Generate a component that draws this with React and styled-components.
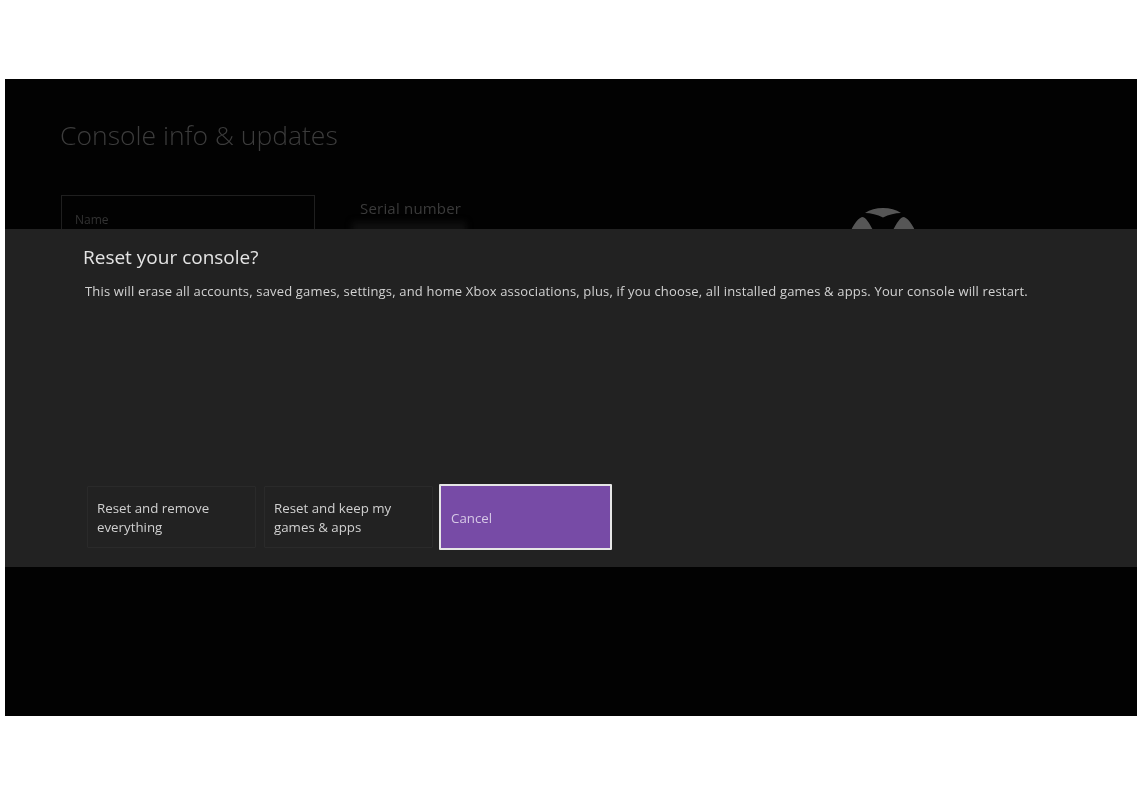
import React from "react";
import styled, { createGlobalStyle } from "styled-components";

const Global = createGlobalStyle`
  html, body { margin: 0; padding: 0; background: #fff; }
  body { font-family: "Open Sans", "Noto Sans", "Liberation Sans", sans-serif; }
`;

const Page = styled.div`
  width: 1141px;
  height: 800px;
  padding: 79px 4px 0 5px;
  box-sizing: border-box;
`;

const Screen = styled.main`
  position: relative;
  width: 1132px;
  height: 637px;
  background: #020202;
  overflow: hidden;
  filter: blur(0.35px);
`;

const Backdrop = styled.section`
  padding: 38px 0 0 55px;
`;

const PageTitle = styled.h1`
  margin: 0 0 42px;
  font-size: 26.5px;
  line-height: 36px;
  font-weight: 300;
  color: #3c3c3c;
  white-space: nowrap;
`;

const InfoRow = styled.div`
  display: flex;
  align-items: flex-start;
`;

const NameField = styled.div`
  width: 254px;
  height: 60px;
  box-sizing: border-box;
  margin: 0 45px 0 1px;
  padding: 15px 13px;
  border: 1px solid #1f1f1f;
  font-size: 12px;
  line-height: 18px;
  color: #333;
`;

const Serial = styled.div`
  width: 300px;
  margin-top: 3px;
  font-size: 15px;
  line-height: 20px;
  letter-spacing: 0.2px;
  color: #3b3b3b;
`;

const SerialValue = styled.div`
  width: 114px;
  height: 14px;
  margin: 4px 0 0 -8px;
  background: #0f0f0f;
  filter: blur(3px);
`;

const Logo = styled.svg`
  display: block;
  flex: none;
  width: 70px;
  height: 70px;
  margin: 12px 0 0 188px;
`;

const Dialog = styled.section`
  position: absolute;
  left: 0;
  right: 0;
  top: 150px;
  height: 338px;
  box-sizing: border-box;
  padding: 15px 78px 0 78px;
  display: flex;
  flex-direction: column;
  background: #222222;
`;

const DialogTitle = styled.h2`
  margin: 0;
  font-size: 19px;
  line-height: 27px;
  font-weight: 400;
  color: #e4e4e4;
  white-space: nowrap;
`;

const Message = styled.p`
  margin: 11px 0 0 2px;
  font-size: 13px;
  line-height: 18px;
  letter-spacing: 0.17px;
  font-weight: 400;
  color: #d2d2d2;
  white-space: nowrap;
`;

const Actions = styled.div`
  display: flex;
  align-items: center;
  gap: 8px;
  margin: auto 0 17px 4px;
`;

const ActionButton = styled.button`
  width: ${(p) => (p.$focused ? "173px" : "169px")};
  height: ${(p) => (p.$focused ? "66px" : "62px")};
  box-sizing: border-box;
  margin-left: ${(p) => (p.$focused ? "-2px" : "0")};
  padding: ${(p) => (p.$focused ? "2px 10px 0" : "2px 9px 0")};
  text-align: left;
  font-family: inherit;
  font-size: 13.3px;
  line-height: 19px;
  color: ${(p) => (p.$focused ? "#d6c8e6" : "#d0d0d0")};
  background: ${(p) => (p.$focused ? "#774ba6" : "transparent")};
  border: ${(p) => (p.$focused ? "2.5px solid #e6e6e6" : "1px solid #2a2a2a")};
  border-radius: 1px;
`;

export default function App() {
  return (
    <Page>
      <Global />
      <Screen>
        <Backdrop>
          <PageTitle>Console info &amp; updates</PageTitle>
          <InfoRow>
            <NameField>Name</NameField>
            <Serial>
              Serial number
              <SerialValue />
            </Serial>
            <Logo viewBox="0 0 70 70" aria-hidden="true">
              <path d="M17 6 C22 2.5 28 1 35 1 C42 1 48 2.5 53 6 C47 6 41 7.5 35 10.5 C29 7.5 23 6 17 6 Z" fill="#565656" />
              <path d="M14 10 C9 12 3 20 0 33 C0 43 3 50 7 56 C9 46 15 35 25 23 C21 16 18 10 14 10 Z" fill="#565656" />
              <path d="M56 10 C61 12 67 20 70 33 C70 43 67 50 63 56 C61 46 55 35 45 23 C49 16 52 10 56 10 Z" fill="#565656" />
            </Logo>
          </InfoRow>
        </Backdrop>
        <Dialog>
          <DialogTitle>Reset your console?</DialogTitle>
          <Message>
            This will erase all accounts, saved games, settings, and home Xbox associations, plus, if you choose, all installed games &amp; apps. Your console will restart.
          </Message>
          <Actions>
            <ActionButton>Reset and remove everything</ActionButton>
            <ActionButton>Reset and keep my games &amp; apps</ActionButton>
            <ActionButton $focused>Cancel</ActionButton>
          </Actions>
        </Dialog>
      </Screen>
    </Page>
  );
}
